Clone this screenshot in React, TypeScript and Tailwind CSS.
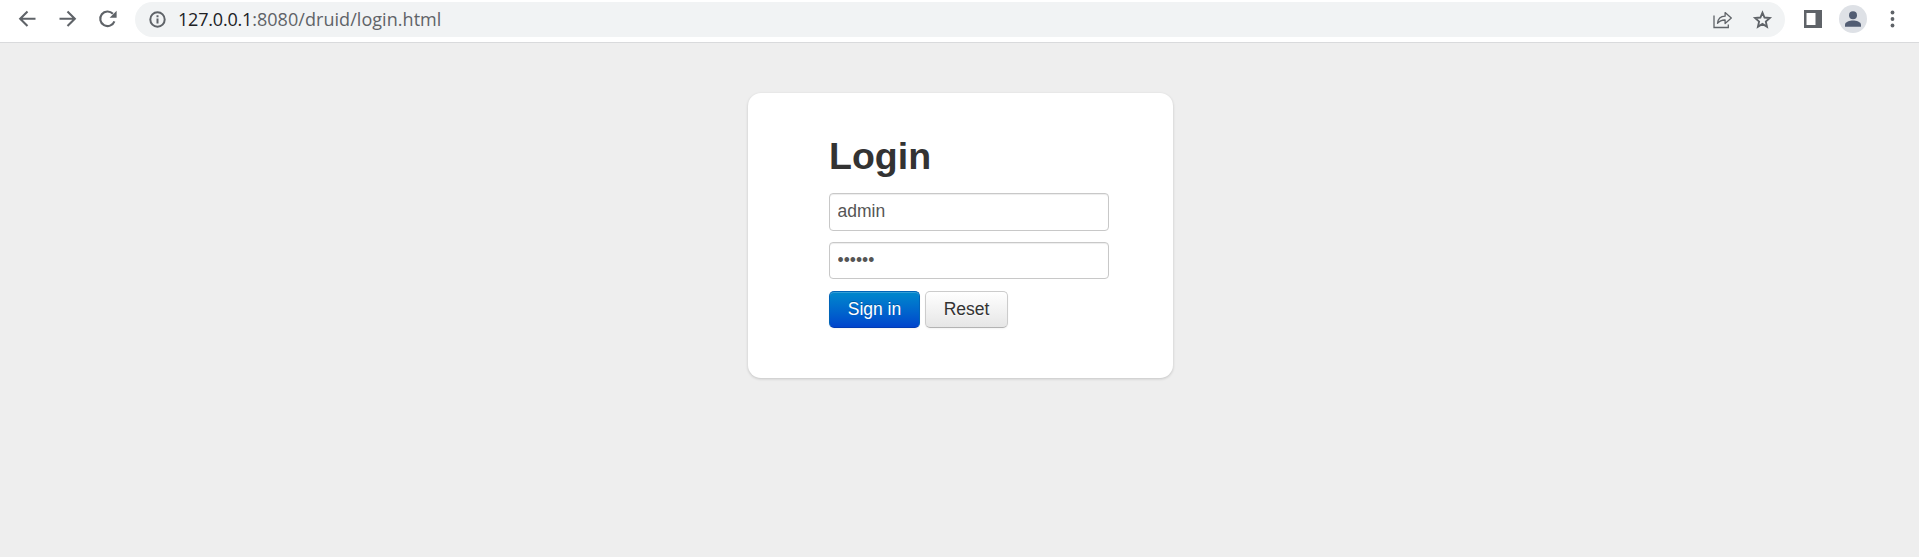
import React from "react";

function Toolbar() {
  return (
    <header className="flex h-[43px] items-start border-b border-[#d9dadc] bg-white text-[#5f6368]">
      <div className="flex h-[38px] w-[135px] shrink-0 items-center gap-[20px] pl-[17px]">
        <svg className="size-5" viewBox="0 0 20 20" fill="none" stroke="currentColor" strokeWidth="2.1">
          <path d="M18.5 9.700H3.500M10.500 2.500L3.200 9.700l7.300 7.200" />
        </svg>
        <svg className="size-5" viewBox="0 0 20 20" fill="none" stroke="currentColor" strokeWidth="2.1">
          <path d="M2.500 9.700h15M10.500 2.500l7.300 7.200-7.300 7.200" />
        </svg>
        <svg className="size-5" viewBox="0 0 20 20" fill="none" stroke="currentColor" strokeWidth="2.1">
          <path d="M17.400 12.300A7.300 7.300 0 1 1 15.900 4.800" />
          <path d="M19.600 1.800v7h-7z" fill="currentColor" stroke="none" />
        </svg>
      </div>
      <div className="mt-[2px] flex h-[35px] w-[1650px] shrink-0 items-center rounded-full bg-[#f1f3f4] pr-[12px] pl-[14px]">
        <svg className="size-[17px]" viewBox="0 0 17 17" fill="none" stroke="currentColor">
          <circle cx="8.500" cy="8.500" r="7.200" strokeWidth="2" />
          <path d="M8.500 7.600v4.800M8.500 4.300v2" strokeWidth="2" />
        </svg>
        <div className="ml-[12px] grow pb-[2px] font-['Open_Sans',sans-serif] text-[18px] leading-[24px] tracking-[0.05px] text-[#5f6368]">
          <span className="tracking-[-0.2px] text-[#202124]">127.0.0.1</span>:8080/druid/login.html
        </div>
        <svg className="h-5 w-5" viewBox="0 0 20 20" fill="none" stroke="currentColor" strokeWidth="1.300">
          <path d="M2 5.500v12h14.300V14.500" />
          <path d="M5.500 13.300C5.900 9 8.700 6.400 13.100 6.200V2.600l6.200 5.500-6.200 5.400V10C9.900 9.900 7.500 10.900 5.500 13.300z" strokeLinejoin="round" />
        </svg>
        <svg className="ml-[19px] size-[22px]" viewBox="0 0 24 24" fill="none" stroke="currentColor" strokeWidth="2">
          <path d="M12.500 3.900l2.250 5.400 5.800.5-4.400 3.850 1.300 5.700L12.500 16.300l-4.950 3.050 1.300-5.700-4.400-3.850 5.800-.5z" />
        </svg>
      </div>
      <div className="flex h-[38px] items-center pl-[19px]">
        <svg className="h-[18px] w-[18px]" viewBox="0 0 18 18" fill="currentColor">
          <path fillRule="evenodd" d="M0 0h18v18H0zM2.500 3v12h9V3z" />
        </svg>
        <svg className="ml-[17px] size-7" viewBox="0 0 28 28">
          <circle cx="14" cy="14" r="14" fill="#dee1e6" />
          <circle cx="14" cy="10.200" r="4" fill="#525d73" />
          <path d="M6 21.800v-2c0-2.800 4.800-4.200 8-4.200s8 1.400 8 4.200v2z" fill="#525d73" />
        </svg>
        <svg className="ml-[23px] h-[18px] w-[5px]" viewBox="0 0 5 18" fill="currentColor">
          <circle cx="2.500" cy="2.500" r="1.900" />
          <circle cx="2.500" cy="9" r="1.900" />
          <circle cx="2.500" cy="15.500" r="1.900" />
        </svg>
      </div>
    </header>
  );
}

const field =
  "block w-[280px] rounded-[4px] border border-[#c8c8c8] bg-white pl-[7.500px] pr-2 text-[17.500px] text-[#555555] shadow-[inset_0_1px_1px_rgba(0,0,0,0.075)] outline-none";
const button =
  "h-[37px] rounded-[5px] border bg-linear-to-b text-[17.500px] leading-[25px]";

export default function App() {
  return (
    <div className="h-[557px] overflow-hidden bg-[#eeeeee] font-['Liberation_Sans',Arial,sans-serif]">
      <Toolbar />
      <main className="flex justify-center pt-[50px] pl-[2px]">
        <form
          className="h-[285px] w-[425px] rounded-[13px] bg-white pt-[38px] pl-[81px] shadow-[0_1px_3px_rgba(0,0,0,0.18)]"
          onSubmit={(e) => e.preventDefault()}
        >
          <h2 className="h-[62px] text-[37.500px] leading-[50px] font-bold text-[#333333]">Login</h2>
          <input className={`${field} h-[38px] pb-[2px]`} type="text" defaultValue="admin" aria-label="Username" />
          <input className={`${field} mt-[11px] h-[37px]`} type="password" defaultValue="123456" aria-label="Password" />
          <div className="mt-[12px] flex gap-[5px]">
            <button
              type="submit"
              className={`${button} w-[91px] border-[#0064b8] border-b-[#003bb3] from-[#0088cc] to-[#0044cc] text-white shadow-[inset_0_1px_0_rgba(255,255,255,0.2),0_1px_2px_rgba(0,0,0,0.05)] [text-shadow:0_-1px_0_rgba(0,0,0,0.25)]`}
            >
              Sign in
            </button>
            <button
              type="reset"
              className={`${button} w-[83px] border-[#cccccc] border-b-[#b3b3b3] from-white to-[#e6e6e6] text-[#333333] shadow-[inset_0_1px_0_rgba(255,255,255,0.2),0_1px_2px_rgba(0,0,0,0.05)] [text-shadow:0_1px_1px_rgba(255,255,255,0.75)]`}
            >
              Reset
            </button>
          </div>
        </form>
      </main>
    </div>
  );
}
